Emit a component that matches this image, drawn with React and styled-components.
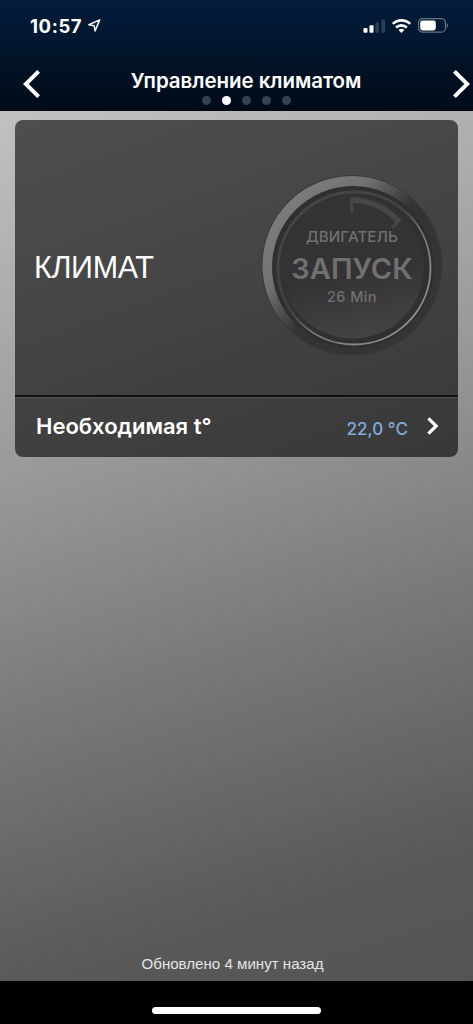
import React from "react";
import styled, { createGlobalStyle } from "styled-components";

const GlobalStyle = createGlobalStyle`
  *, *::before, *::after { box-sizing: border-box; }
  body { margin: 0; background: #000; }
`;

const Screen = styled.div`
  display: flex;
  flex-direction: column;
  width: 473px;
  height: 1024px;
  overflow: hidden;
  font-family: Inter, "Liberation Sans", sans-serif;
  color: #fff;
`;

const Header = styled.header`
  display: flex;
  flex-direction: column;
  height: 111px;
  flex: none;
  background: linear-gradient(180deg, #031c3a 0%, #021730 35%, #010e1e 80%, #010b18 100%);
`;

const StatusBar = styled.div`
  display: flex;
  align-items: center;
  height: 51px;
  padding: 0 25px 0 30px;
`;

const Time = styled.span`
  font-size: 18.5px;
  font-weight: 700;
  letter-spacing: 0.6px;
  line-height: 22px;
  width: 58px;
  white-space: nowrap;
`;

const StatusIcons = styled.div`
  display: flex;
  align-items: center;
  gap: 6px;
  margin-left: auto;
`;

const NavBar = styled.nav`
  display: grid;
  grid-template-columns: 42px 1fr 22px;
  height: 60px;
`;

const ArrowButton = styled.button`
  display: flex;
  justify-content: ${(p) => p.$align};
  align-items: flex-start;
  border: 0;
  background: none;
  padding: ${(p) => p.$pad};
  color: inherit;
`;

const TitleBlock = styled.div`
  display: flex;
  flex-direction: column;
  align-items: center;
  padding: 17px 0 0 0;
  margin-left: -1px;
`;

const Title = styled.h1`
  margin: 0;
  font-size: 20.5px;
  font-weight: 600;
  line-height: 26px;
  letter-spacing: -0.05px;
  white-space: nowrap;
`;

const Dots = styled.div`
  display: flex;
  gap: 11px;
  margin-top: 2px;
`;

const Dot = styled.span`
  width: 9px;
  height: 9px;
  border-radius: 50%;
  background: ${(p) => (p.$active ? "#fff" : "#36424f")};
`;

const Content = styled.main`
  display: flex;
  flex-direction: column;
  flex: 1;
  padding: 9px 15px 0;
  background: linear-gradient(163deg, #c1c1c1 0%, #b4b4b4 12%, #979797 38%, #787878 61%, #595959 86%, #545454 100%);
`;

const Card = styled.section`
  display: flex;
  flex-direction: column;
  height: 337px;
  border-radius: 8px;
  overflow: hidden;
  background: linear-gradient(160deg, #4e4e4e 0%, #444 48%, #383838 100%);
`;

const ClimateRow = styled.div`
  display: flex;
  align-items: center;
  justify-content: space-between;
  height: 275px;
  padding: 0 14px 0 19px;
`;

const ClimateLabel = styled.h2`
  margin: 19px 0 0;
  font-family: "Liberation Sans", Arial, sans-serif;
  font-size: 30.5px;
  font-weight: 400;
  letter-spacing: -0.35px;
  line-height: 34px;
`;

const Dial = styled.button`
  display: grid;
  place-items: center;
  width: 184px;
  height: 184px;
  margin-top: 17px;
  padding: 0;
  border: 0;
  background: none;
  color: #717071;
  font-family: inherit;

  > * { grid-area: 1 / 1; }
`;

const DialText = styled.span`
  display: flex;
  flex-direction: column;
  align-items: center;
  margin-bottom: 3px;
  white-space: nowrap;
  z-index: 1;
`;

const DialLine = styled.span`
  font-size: ${(p) => p.$size}px;
  line-height: ${(p) => p.$line}px;
  font-weight: ${(p) => p.$weight};
  letter-spacing: ${(p) => p.$spacing}px;
`;

const TemperatureRow = styled.div`
  display: flex;
  align-items: center;
  height: 62px;
  padding: 0 19px 2px 21px;
  border-top: 2px solid #101010;
  box-shadow: inset 0 1px 0 #535353;
`;

const RowLabel = styled.span`
  margin-bottom: 1px;
  font-size: 22px;
  font-weight: 600;
  line-height: 28px;
`;

const RowValue = styled.span`
  margin: 6px 19px 0 auto;
  font-size: 17px;
  font-weight: 500;
  line-height: 22px;
  letter-spacing: 0.05px;
  color: #82abdc;
`;

const Updated = styled.p`
  margin: auto 0 7px;
  padding-right: 8px;
  font-family: "Liberation Sans", Arial, sans-serif;
  font-size: 15.1px;
  line-height: 20px;
  text-align: center;
  color: #e4e4e4;
`;

const HomeArea = styled.footer`
  display: flex;
  justify-content: center;
  height: 43px;
  flex: none;
  padding-top: 26px;
  background: #000;
`;

const HomeIndicator = styled.span`
  width: 169px;
  height: 7px;
  border-radius: 4px;
  background: #fff;
`;

const LocationIcon = () => (
  <svg width="14" height="15" viewBox="0 0 14 15" fill="none" stroke="#fff" strokeWidth="1.5" strokeLinejoin="round">
    <path d="M11.7 1.9.9 6.8l5.2.9 1 5.2Z" />
  </svg>
);

const SignalIcon = () => (
  <svg width="22" height="14" viewBox="0 0 22 14">
    <rect x="0.5" y="9" width="4" height="4.8" rx="1" fill="#fff" />
    <rect x="6.5" y="6.3" width="4" height="7.5" rx="1" fill="#fff" />
    <rect x="12.4" y="3.4" width="3.6" height="10.4" rx="1" fill="#2d3f54" />
    <rect x="18.4" y="0.6" width="3.6" height="13.2" rx="1" fill="#2d3f54" />
  </svg>
);

const WifiIcon = () => (
  <svg width="20" height="14" viewBox="0 0 20 14" fill="none" stroke="#fff" strokeWidth="2.6">
    <path d="M1.8 4.9a12.5 12.5 0 0 1 17.4 0" />
    <path d="M5 8.5a7.8 7.8 0 0 1 10.8 0" />
    <path d="M10.4 13.9 7.5 11.1a4.1 4.1 0 0 1 5.8 0Z" fill="#fff" stroke="none" />
  </svg>
);

const BatteryIcon = () => (
  <svg width="31" height="15" viewBox="0 0 31 15">
    <rect x="1.6" y="0.6" width="26.8" height="13.6" rx="4" fill="none" stroke="#657382" strokeWidth="1.2" />
    <rect x="3.2" y="2.4" width="15.6" height="10" rx="2.3" fill="#fff" />
    <path d="M29.6 5v4.8c1.8-.8 1.8-4 0-4.8Z" fill="#657382" />
  </svg>
);

const Chevron = ({ width, height, stroke, left }) => (
  <svg width={width} height={height} viewBox={`0 0 ${width} ${height}`} fill="none" stroke="#fff" strokeWidth={stroke}>
    <path
      d={
        left
          ? `M${width - 1.4} 1.4 2.8 ${height / 2} ${width - 1.4} ${height - 1.4}`
          : `M1.4 1.4 ${width - 2.8} ${height / 2} 1.4 ${height - 1.4}`
      }
    />
  </svg>
);

const DialFace = () => (
  <svg width="184" height="184" viewBox="0 0 184 184" fill="none">
    <defs>
      <linearGradient id="bezel" x1="0.12" y1="0.15" x2="0.88" y2="0.85">
        <stop offset="0" stopColor="#7c7c7d" />
        <stop offset="0.25" stopColor="#727273" />
        <stop offset="0.42" stopColor="#484749" />
        <stop offset="0.52" stopColor="#343234" />
        <stop offset="1" stopColor="#363436" />
      </linearGradient>
      <linearGradient id="rim" x1="0.15" y1="0.15" x2="0.82" y2="0.85">
        <stop offset="0" stopColor="#454445" />
        <stop offset="0.45" stopColor="#454445" />
        <stop offset="0.62" stopColor="#777" />
        <stop offset="1" stopColor="#8d8d8d" />
      </linearGradient>
      <linearGradient id="innerRim" x1="0.2" y1="0.1" x2="0.65" y2="0.65">
        <stop offset="0" stopColor="#454445" />
        <stop offset="1" stopColor="#454445" stopOpacity="0" />
      </linearGradient>
      <linearGradient id="face" x1="0.4" y1="0" x2="0.6" y2="1">
        <stop offset="0" stopColor="#353335" />
        <stop offset="0.55" stopColor="#343234" />
        <stop offset="1" stopColor="#454445" />
      </linearGradient>
    </defs>
    <circle cx="92" cy="91.5" r="90.5" fill="#3b3a3b" />
    <circle cx="92" cy="91.5" r="89.5" fill="url(#bezel)" />
    <circle cx="93" cy="93" r="81" fill="#302e30" />
    <circle cx="94" cy="94" r="76.5" fill="#312f31" stroke="url(#rim)" strokeWidth="1.9" />
    <circle cx="94" cy="94" r="75.2" stroke="url(#innerRim)" strokeWidth="2.2" />
    <circle cx="92.5" cy="93" r="71.5" fill="url(#face)" />
    <path
      d="M90.2 23.2A69.5 69.5 0 0 1 141.7 46l-8.2 8.6-2.2-2.1 4.3-4.5A61.5 61.5 0 0 0 93.2 29v10h-3Z"
      fill="#484648"
    />
  </svg>
);

export default function App() {
  return (
    <Screen>
      <GlobalStyle />
      <Header>
        <StatusBar>
          <Time>10:57</Time>
          <LocationIcon />
          <StatusIcons>
            <SignalIcon />
            <WifiIcon />
            <BatteryIcon />
          </StatusIcons>
        </StatusBar>
        <NavBar>
          <ArrowButton $align="flex-end" $pad="19px 2px 0 0" aria-label="Назад">
            <Chevron width={17} height={28} stroke={4} left />
          </ArrowButton>
          <TitleBlock>
            <Title>Управление климатом</Title>
            <Dots>
              {[0, 1, 2, 3, 4].map((page) => (
                <Dot key={page} $active={page === 1} />
              ))}
            </Dots>
          </TitleBlock>
          <ArrowButton $align="flex-start" $pad="19px 0 0 2px" aria-label="Вперёд">
            <Chevron width={17} height={28} stroke={4} />
          </ArrowButton>
        </NavBar>
      </Header>
      <Content>
        <Card>
          <ClimateRow>
            <ClimateLabel>КЛИМАТ</ClimateLabel>
            <Dial>
              <DialFace />
              <DialText>
                <DialLine $size={15.2} $line={22} $weight={500} $spacing={0.05}>ДВИГАТЕЛЬ</DialLine>
                <DialLine $size={29} $line={42} $weight={600} $spacing={0}>ЗАПУСК</DialLine>
                <DialLine $size={14.5} $line={14} $weight={500} $spacing={0.4}>26 Min</DialLine>
              </DialText>
            </Dial>
          </ClimateRow>
          <TemperatureRow>
            <RowLabel>Необходимая t°</RowLabel>
            <RowValue>22,0 °C</RowValue>
            <Chevron width={12} height={18} stroke={3.2} />
          </TemperatureRow>
        </Card>
        <Updated>Обновлено 4 минут назад</Updated>
      </Content>
      <HomeArea>
        <HomeIndicator />
      </HomeArea>
    </Screen>
  );
}
